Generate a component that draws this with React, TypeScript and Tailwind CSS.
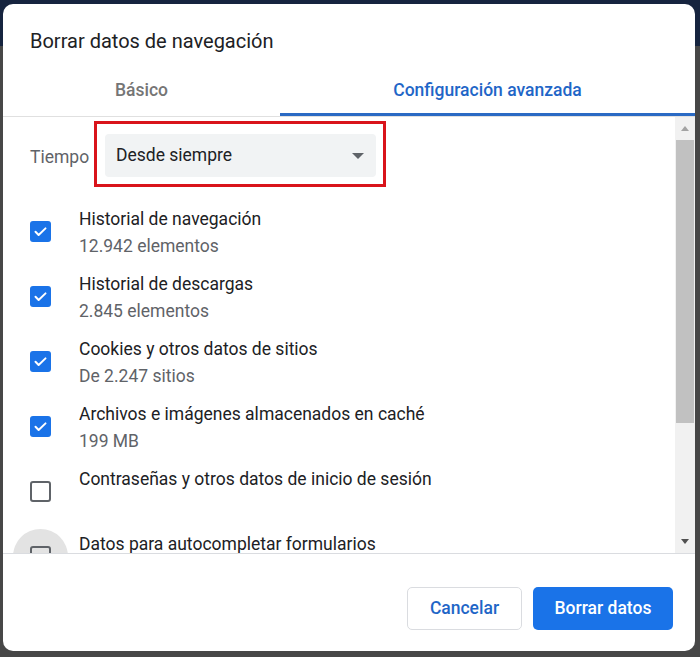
import React from 'react';

type Item = {
  title: string;
  detail?: string;
  checked: boolean;
  focused?: boolean;
};

const items: Item[] = [
  { title: 'Historial de navegación', detail: '12.942 elementos', checked: true },
  { title: 'Historial de descargas', detail: '2.845 elementos', checked: true },
  { title: 'Cookies y otros datos de sitios', detail: 'De 2.247 sitios', checked: true },
  { title: 'Archivos e imágenes almacenados en caché', detail: '199 MB', checked: true },
  { title: 'Contraseñas y otros datos de inicio de sesión', checked: false },
  { title: 'Datos para autocompletar formularios', checked: false, focused: true },
];

const CheckBox = ({ checked, focused }: { checked: boolean; focused?: boolean }) => (
  <div className="relative w-[21px] h-[21px] shrink-0">
    {focused && (
      <div className="absolute left-[-17px] top-[-17px] w-[55px] h-[55px] rounded-full bg-[#e3e3e3]" />
    )}
    {checked ? (
      <div className="relative w-[21px] h-[21px] rounded-[3px] bg-[#1a73e8] flex items-center justify-center">
        <svg width="15" height="15" viewBox="0 0 24 24" fill="none">
          <path d="M4 12.5l5 5L20 7" stroke="white" strokeWidth="3.2" strokeLinecap="round" strokeLinejoin="round" />
        </svg>
      </div>
    ) : (
      <div className="relative w-[21px] h-[21px] rounded-[3px] border-[2px] border-[#5f6368] bg-transparent" />
    )}
  </div>
);

const ScrollBar = () => (
  <div className="w-[20px] h-full bg-[#f1f1f1] flex flex-col">
    <div className="h-[23px] flex items-center justify-center">
      <div className="w-0 h-0 border-l-[4px] border-r-[4px] border-b-[5px] border-l-transparent border-r-transparent border-b-[#a3a3a3]" />
    </div>
    <div className="h-[283px] mx-[1px] bg-[#c1c1c1]" />
    <div className="flex-1" />
    <div className="h-[24px] flex items-center justify-center">
      <div className="w-0 h-0 border-l-[4px] border-r-[4px] border-t-[5px] border-l-transparent border-r-transparent border-t-[#505050]" />
    </div>
  </div>
);

export default function App() {
  return (
    <div className="w-[700px] h-[657px] pt-[4px] pl-[3px] bg-[linear-gradient(to_bottom,#16243f_0px,#16243f_46px,#474747_46px)] font-['Roboto',sans-serif]">
      <div className="w-[692px] h-[647px] bg-white rounded-[10px] flex flex-col overflow-hidden">
        {/* header */}
        <h1 className="h-[60px] pl-[27px] pt-[24px] text-[20px] leading-[26px] font-normal text-[#202124]">
          Borrar datos de navegación
        </h1>

        {/* tabs */}
        <div className="flex h-[53px] border-b border-[#e0e0e0]">
          <div className="w-[277px] h-[52px] pt-[3px] flex items-center justify-center text-[17.5px] font-medium text-[#757575] border-b-[3px] border-transparent">
            Básico
          </div>
          <div className="flex-1 h-[52px] pt-[3px] flex items-center justify-center text-[17.5px] font-medium text-[#1f66c7] border-b-[3px] border-[#2a6ac4]">
            Configuración avanzada
          </div>
        </div>

        {/* scrollable options */}
        <div className="flex h-[436px]">
          <div className="flex-1 overflow-hidden pl-[27px] pt-[4px]">
            <div className="flex items-center">
              <span className="w-[64px] pt-[6px] text-[17.5px] text-[#5f6368]">Tiempo</span>
              <div className="border-[3px] border-[#d9141b] pt-[10px] pb-[7px] pl-[8px] pr-[7px]">
                <div className="w-[271px] h-[43px] rounded-[4px] bg-[#f1f3f4] pl-[11px] pr-[12px] flex items-center justify-between">
                  <span className="text-[17.5px] text-[#202124]">Desde siempre</span>
                  <div className="w-0 h-0 border-l-[6px] border-r-[6px] border-t-[6px] border-l-transparent border-r-transparent border-t-[#5f6368]" />
                </div>
              </div>
            </div>

            <div className="mt-[18px] flex flex-col gap-[13px]">
              {items.map((it) => (
                <div key={it.title} className="flex items-center h-[52px]">
                  <CheckBox checked={it.checked} focused={it.focused} />
                  <div className="ml-[28px] self-start pt-[1px]">
                    <div className="relative text-[17.5px] leading-[26px] text-[#202124]">{it.title}</div>
                    {it.detail && (
                      <div className="mt-[1px] text-[17.5px] leading-[26px] text-[#5f6368]">{it.detail}</div>
                    )}
                  </div>
                </div>
              ))}
            </div>
          </div>
          <ScrollBar />
        </div>

        {/* footer */}
        <div className="flex-1 border-t border-[#dadce0] flex justify-end items-start gap-[11px] pt-[33px] pr-[22px]">
          <button className="w-[115px] h-[43px] rounded-[5px] border border-[#dadce0] bg-white text-[17.5px] font-medium text-[#1f66c7]">
            Cancelar
          </button>
          <button className="w-[140px] h-[43px] rounded-[5px] bg-[#1a73e8] text-[17.5px] font-medium text-white">
            Borrar datos
          </button>
        </div>
      </div>
    </div>
  );
}
